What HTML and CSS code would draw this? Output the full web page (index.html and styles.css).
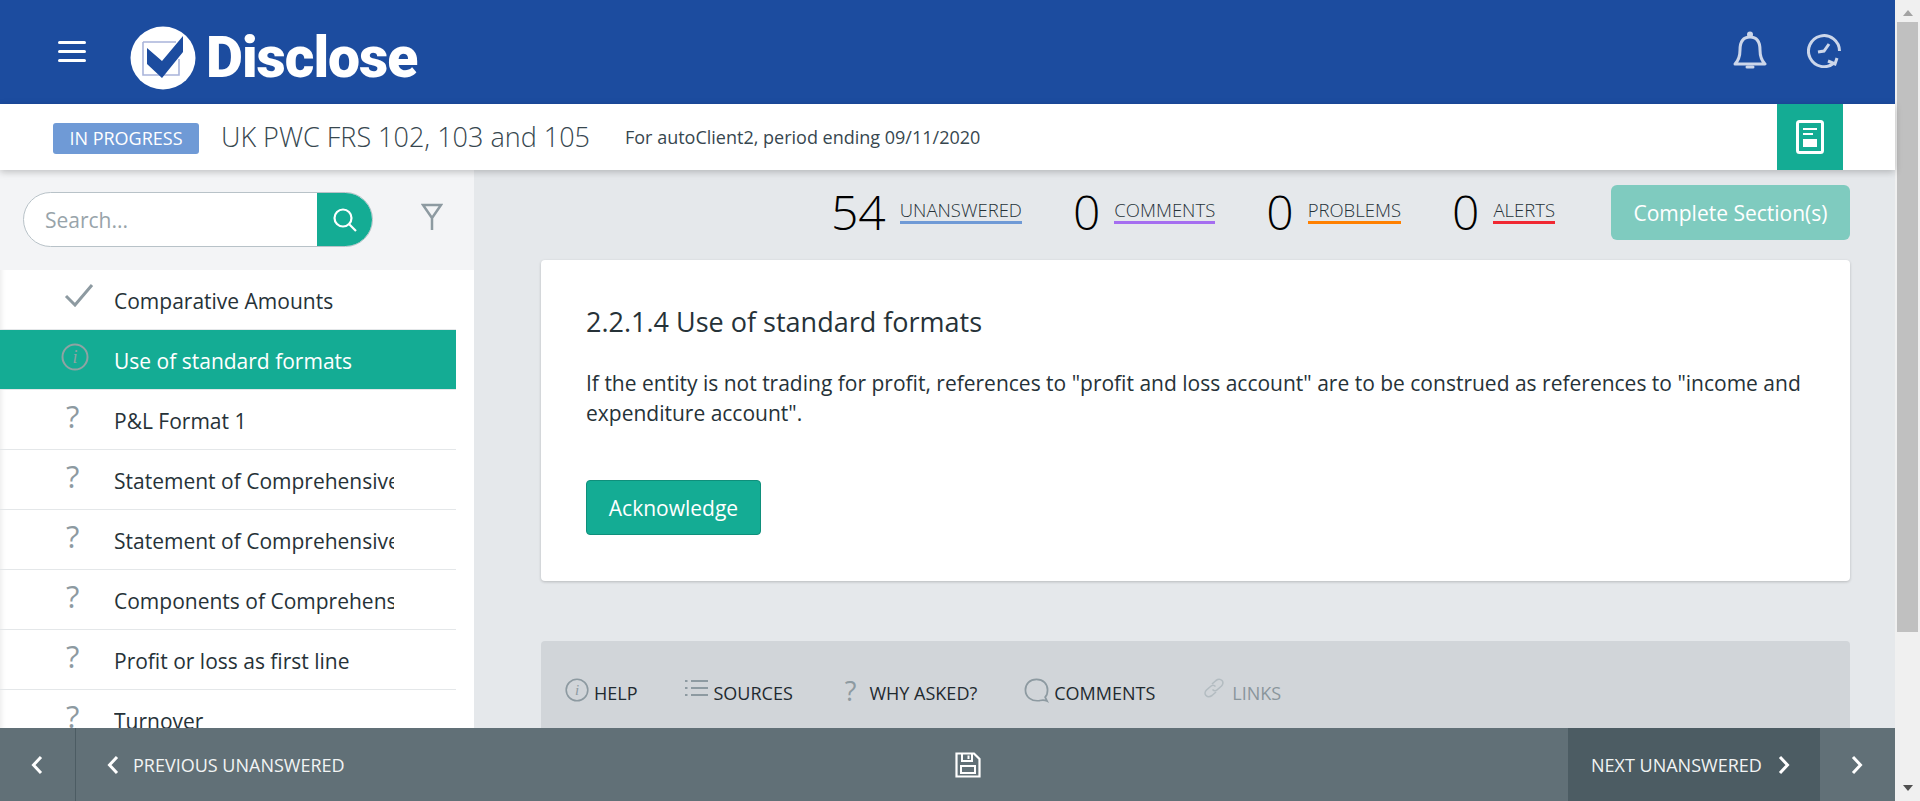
FILE: index.html
```html
<!DOCTYPE html>
<html lang="en">

<head>
    <meta charset="UTF-8">
    <title>Disclose</title>
    <link rel="stylesheet" href="styles.css">
</head>

<body>
    <div class="page">
        <header class="topbar">
            <div class="burger"><span></span><span></span><span></span></div>
            <svg class="logo-mark" viewBox="0 0 66 64">
                <ellipse cx="33" cy="32" rx="32.5" ry="31.5" fill="#fff" />
                <path d="M13 16H46M13 16V49H49V33" fill="none" stroke="#a9b4da" stroke-width="1.6" />
                <path d="M17 22L32 35L53 10V26L32 52L17 38Z" fill="#1c4c9f" />
            </svg>
            <span class="logo-text">Disclose</span>
            <div class="topbar-icons">
                <svg class="bell" viewBox="0 0 34 40" fill="none" stroke="#ccd6ea" stroke-width="3">
                    <path d="M2 33C6 29 7 25 7 19C7 11 10 6 17 6C24 6 27 11 27 19C27 25 28 29 32 33Z" stroke-linejoin="round" />
                    <circle cx="17" cy="3.5" r="1.5" />
                    <path d="M14 36H20" stroke-linecap="round" />
                </svg>
                <svg class="clock" viewBox="0 0 34 34" fill="none" stroke="#ccd6ea" stroke-width="3">
                    <path d="M27 29A15.500 15.500 0 1 1 32.500 17" />
                    <path d="M21 27L28 30L30 24" />
                    <path d="M22 10L17 17L11 18" />
                </svg>
            </div>
        </header>

        <div class="subbar">
            <span class="badge">IN PROGRESS</span>
            <h1 class="doc-title">UK PWC FRS 102, 103 and 105</h1>
            <span class="doc-meta">For autoClient2, period ending 09/11/2020</span>
            <div class="doc-btn">
                <svg viewBox="0 0 28 34" width="28" height="34" fill="none" stroke="#fff" stroke-width="3">
                    <rect x="1.500" y="1.500" width="25" height="31" rx="2" />
                    <path d="M7 9H21M7 14H17" stroke-width="2" />
                    <rect x="7" y="19" width="14" height="8" fill="#fff" stroke="none" />
                </svg>
            </div>
        </div>

        <div class="content">
            <aside class="sidebar">
                <div class="search-area">
                    <div class="search">
                        <span class="search-input">Search...</span>
                        <div class="search-btn">
                            <svg viewBox="0 0 26 26" width="26" height="26" fill="none" stroke="#fff" stroke-width="2.200">
                                <circle cx="11" cy="11" r="8.500" />
                                <path d="M17 17L24 24" />
                            </svg>
                        </div>
                    </div>
                    <svg class="funnel" viewBox="0 0 22 28" fill="none" stroke="#8d9aa1" stroke-width="2.500">
                        <path d="M2 2H20L11 15ZM11 15V27" />
                    </svg>
                </div>
                <ul class="nav-list">
                    <li class="nav-item">
                        <span class="nav-icon check">
                            <svg viewBox="0 0 30 24" width="30" height="24" fill="none" stroke="#8d9aa1" stroke-width="3">
                                <path d="M2 13L11 22L28 2" />
                            </svg>
                        </span>
                        <span class="nav-text">Comparative Amounts</span>
                    </li>
                    <li class="nav-item active">
                        <span class="nav-icon">
                            <svg class="info" viewBox="0 0 28 28" width="28" height="28">
                                <circle cx="14" cy="14" r="12.500" fill="none" stroke="#8fa3a3" stroke-width="2" />
                                <text x="14" y="20" text-anchor="middle" class="info-i" fill="#8fa3a3">i</text>
                            </svg>
                        </span>
                        <span class="nav-text">Use of standard formats</span>
                    </li>
                    <li class="nav-item"><span class="nav-icon q">?</span><span class="nav-text">P&amp;L Format 1</span></li>
                    <li class="nav-item"><span class="nav-icon q">?</span><span class="nav-text">Statement of Comprehensive</span></li>
                    <li class="nav-item"><span class="nav-icon q">?</span><span class="nav-text">Statement of Comprehensive</span></li>
                    <li class="nav-item"><span class="nav-icon q">?</span><span class="nav-text">Components of Comprehensive</span></li>
                    <li class="nav-item"><span class="nav-icon q">?</span><span class="nav-text">Profit or loss as first line</span></li>
                    <li class="nav-item"><span class="nav-icon q">?</span><span class="nav-text">Turnover</span></li>
                </ul>
            </aside>

            <main class="main">
                <div class="stats">
                    <div class="stat"><span class="stat-num">54</span><span class="stat-label blue">UNANSWERED</span></div>
                    <div class="stat"><span class="stat-num">0</span><span class="stat-label purple">COMMENTS</span></div>
                    <div class="stat"><span class="stat-num">0</span><span class="stat-label orange">PROBLEMS</span></div>
                    <div class="stat"><span class="stat-num">0</span><span class="stat-label red">ALERTS</span></div>
                    <button class="complete-btn">Complete Section(s)</button>
                </div>

                <section class="card">
                    <h2>2.2.1.4 Use of standard formats</h2>
                    <p>If the entity is not trading for profit, references to "profit and loss account" are to be construed as references to "income and expenditure account".</p>
                    <button class="ack-btn">Acknowledge</button>
                </section>

                <section class="tabs">
                    <div class="tab">
                        <svg class="info" viewBox="0 0 24 24" width="24" height="24">
                            <circle cx="12" cy="12" r="10.800" fill="none" stroke="#8d9aa1" stroke-width="1.600" />
                            <text x="12" y="17" text-anchor="middle" class="info-i small" fill="#8d9aa1">i</text>
                        </svg>
                        <span>HELP</span>
                    </div>
                    <div class="tab">
                        <svg viewBox="0 0 24 20" width="24" height="20" fill="none" stroke="#8d9aa1" stroke-width="2">
                            <path d="M7 3H24M7 10H24M7 17H24" />
                            <path d="M1 3H3.500M1 10H3.500M1 17H3.500" />
                        </svg>
                        <span>SOURCES</span>
                    </div>
                    <div class="tab">
                        <span class="q small-q">?</span>
                        <span>WHY ASKED?</span>
                    </div>
                    <div class="tab">
                        <svg viewBox="0 0 26 26" width="25" height="25" fill="none" stroke="#8d9aa1" stroke-width="1.800">
                            <path d="M24 24C21 22.500 19 23 16 23.500C8 24.500 1.500 20 1.500 12.500C1.500 6 6 1.500 13 1.500C20 1.500 24.500 6 24.500 12.500C24.500 16 23 19 22 20Z" />
                        </svg>
                        <span>COMMENTS</span>
                    </div>
                    <div class="tab off">
                        <svg viewBox="0 0 20 20" width="20" height="20" fill="none" stroke="#b3bcc1" stroke-width="1.600">
                            <path d="M8 6L12 2.500C14 1 16.500 1 18 2.500C19.500 4 19 6.500 17.500 8L13.500 11.500C12 13 10 13 8.500 11.500" />
                            <path d="M12 14L8 17.500C6 19 3.500 19 2 17.500C0.500 16 1 13.500 2.500 12L6.500 8.500C8 7 10 7 11.500 8.500" />
                        </svg>
                        <span>LINKS</span>
                    </div>
                </section>
            </main>
        </div>

        <footer class="footer">
            <div class="foot-back">
                <svg class="chev" viewBox="0 0 12 20"><path d="M10 2L2.500 10L10 18" /></svg>
            </div>
            <div class="foot-prev">
                <svg class="chev" viewBox="0 0 12 20"><path d="M10 2L2.500 10L10 18" /></svg>
                <span>PREVIOUS UNANSWERED</span>
            </div>
            <div class="foot-save">
                <svg viewBox="0 0 26 26" width="26" height="26" fill="none" stroke="#fff" stroke-width="2.200">
                    <path d="M1.500 1.500H19L24.500 7V24.500H1.500Z" />
                    <path d="M7 2V9H17V2M13.500 3.500V7" stroke-width="2" />
                    <rect x="6" y="14" width="14" height="7" stroke-width="2" />
                </svg>
            </div>
            <div class="foot-next">
                <span>NEXT UNANSWERED</span>
                <svg class="chev" viewBox="0 0 12 20"><path d="M2 2L9.500 10L2 18" /></svg>
            </div>
            <div class="foot-fwd">
                <svg class="chev" viewBox="0 0 12 20"><path d="M2 2L9.500 10L2 18" /></svg>
            </div>
        </footer>
    </div>

    <div class="scrollbar">
        <span class="arrow-up"></span>
        <div class="thumb"></div>
        <span class="arrow-down"></span>
    </div>
</body>

</html>
```

FILE: styles.css
```css
* {
    margin: 0;
    padding: 0;
    box-sizing: border-box;
    font-family: "Open Sans", Arial, sans-serif;
}

html,
body {
    height: 100%;
    overflow: hidden;
}

body {
    display: flex;
    background: #f0f0f0;
    color: #263238;
}

.page {
    width: 1895px;
    height: 801px;
    display: flex;
    flex-direction: column;
}

/* top bar */
.topbar {
    height: 104px;
    flex: none;
    background: #1c4c9f;
    display: flex;
    align-items: center;
    padding-left: 58px;
}

.burger {
    width: 28px;
    display: flex;
    flex-direction: column;
    gap: 6px;
    margin-right: 44px;
    margin-bottom: 2px;
}

.burger span {
    height: 3px;
    background: #fff;
    border-radius: 2px;
}

.logo-mark {
    width: 66px;
    height: 64px;
    margin-top: 11px;
    margin-bottom: 0;
}

.logo-text {
    font-family: Roboto, Arial, sans-serif;
    font-weight: 900;
    font-size: 57px;
    color: #fff;
    margin-left: 10px;
    margin-top: 10px;
    letter-spacing: -1px;
}

.topbar-icons {
    margin-left: auto;
    margin-right: 54px;
    display: flex;
    align-items: center;
    gap: 40px;
    margin-bottom: 2px;
}

.bell {
    width: 34px;
    height: 40px;
}

.clock {
    width: 34px;
    height: 34px;
}

/* sub bar */
.subbar {
    height: 66px;
    flex: none;
    background: #fff;
    display: flex;
    align-items: center;
    padding-left: 53px;
    position: relative;
    z-index: 2;
    box-shadow: 0 2px 7px rgba(0, 0, 0, 0.22);
}

.badge {
    width: 146px;
    height: 31px;
    background: #6f9ad6;
    border-radius: 3px;
    color: #fff;
    font-size: 18px;
    line-height: 31px;
    text-align: center;
    margin-top: 2px;
}

.doc-title {
    font-size: 27px;
    font-weight: 300;
    color: #37474f;
    margin-left: 22px;
    margin-bottom: 2px;
}

.doc-meta {
    font-size: 18px;
    color: #37474f;
    margin-left: 35px;
}

.doc-btn {
    margin-left: auto;
    margin-right: 52px;
    width: 66px;
    height: 66px;
    background: #14ac94;
    display: flex;
    align-items: center;
    justify-content: center;
}

/* main area */
.content {
    flex: 1;
    display: flex;
    min-height: 0;
    overflow: hidden;
    background: #e5e8eb;
}

.sidebar {
    width: 474px;
    flex: none;
    background: #fff;
    box-shadow: inset 6px 0 6px -6px rgba(0, 0, 0, 0.12);
}

.search-area {
    height: 100px;
    background: #f3f4f6;
    display: flex;
    align-items: flex-start;
    padding: 22px 0 0 23px;
}

.search {
    width: 350px;
    height: 55px;
    display: flex;
    border-radius: 28px;
    overflow: hidden;
    background: #fff;
    border: 1px solid #b8c2c8;
}

.search-input {
    flex: 1;
    font-size: 21px;
    line-height: 55px;
    padding-left: 21px;
    color: #98a4aa;
}

.search-btn {
    width: 56px;
    margin: -1px;
    background: #14ac94;
    display: flex;
    align-items: center;
    justify-content: center;
}

.funnel {
    width: 22px;
    height: 28px;
    margin: 11px 0 0 48px;
}

.nav-list {
    list-style: none;
    width: 456px;
}

.nav-item {
    height: 60px;
    display: flex;
    border-bottom: 1px solid #e4e7e9;
    font-size: 21px;
    line-height: 63px;
}

.nav-item.active {
    background: #14ac94;
    color: #fff;
}

.nav-icon {
    width: 114px;
    flex: none;
    padding: 13px 0 0 61px;
    line-height: 1;
}

.nav-icon.check {
    padding-left: 64px;
}

.nav-icon svg {
    display: block;
}

.q {
    color: #8d9aa1;
    font-weight: 400;
    font-size: 31px;
}

.nav-icon.q {
    padding: 11px 0 0 66px;
}

.nav-text {
    width: 280px;
    overflow: hidden;
    white-space: nowrap;
}

.info-i {
    font-family: "Liberation Serif", serif;
    font-style: italic;
    font-size: 18px;
}

.info-i.small {
    font-size: 15px;
}

.main {
    flex: 1;
    padding: 0 45px 0 67px;
}

.stats {
    height: 90px;
    display: flex;
    align-items: flex-start;
    justify-content: flex-end;
    padding-top: 15px;
}

.stat {
    display: flex;
    align-items: center;
    gap: 14px;
    margin-right: 51px;
    height: 45px;
}

.stat:nth-child(4) {
    margin-right: 56px;
}

.stat-num {
    font-size: 48px;
    font-weight: 300;
    color: #000;
    line-height: 1;
    margin-top: 8px;
}

.stat-label {
    font-size: 18.5px;
    font-weight: 300;
    color: #263238;
    line-height: 22px;
    border-bottom: 3px solid;
    margin-top: 7px;
}

.blue {
    border-color: #6f9ad6;
}

.purple {
    border-color: #a56ef0;
}

.orange {
    border-color: #ff8000;
}

.red {
    border-color: #f02832;
}

.complete-btn {
    width: 239px;
    height: 55px;
    background: #7fcbbf;
    border: none;
    border-radius: 6px;
    color: #fff;
    font-size: 21px;
}

.card {
    height: 321px;
    background: #fff;
    border-radius: 4px;
    box-shadow: 0 1px 3px rgba(0, 0, 0, 0.2);
    padding: 45px 45px 0;
}

.card h2 {
    font-size: 27px;
    font-weight: 400;
    color: #263238;
    line-height: 33px;
}

.card p {
    font-size: 21px;
    line-height: 30px;
    color: #263238;
    margin-top: 30px;
}

.ack-btn {
    width: 175px;
    height: 55px;
    margin-top: 52px;
    background: #14ac94;
    border: 1px solid #0f8f7b;
    border-radius: 4px;
    color: #fff;
    font-size: 21px;
    font-weight: 500;
}

.tabs {
    height: 200px;
    margin-top: 60px;
    background: #d1d5d9;
    border-radius: 4px 4px 0 0;
    display: flex;
    align-items: flex-start;
    padding: 37px 0 0 24px;
    gap: 47px;
}

.tab {
    display: flex;
    align-items: flex-start;
    gap: 6px;
    font-size: 18px;
    font-weight: 500;
    color: #1f2a30;
}

.tab span:last-child {
    margin-top: 3px;
}

.tab:nth-child(1) {
    gap: 5px;
    margin-right: -1px;
}

.tab:nth-child(2) {
    margin-right: 5px;
}

.tab:nth-child(4) {
    gap: 5px;
    margin-right: 2px;
}

.tab.off {
    gap: 8px;
    color: #8a969c;
    font-weight: 400;
}

.small-q {
    font-size: 27px;
    line-height: 1;
    margin: -1px 7px 0 0;
}

/* footer */
.footer {
    height: 73px;
    flex: none;
    background: #617077;
    display: flex;
    align-items: stretch;
    color: #f2f4f4;
    font-size: 18px;
    position: relative;
    z-index: 3;
}

.chev {
    width: 12px;
    height: 20px;
    fill: none;
    stroke: #fff;
    stroke-width: 3;
}

.foot-back {
    width: 76px;
    flex: none;
    border-right: 1px solid #4c5c63;
    display: flex;
    align-items: center;
    padding-left: 31px;
}

.foot-prev {
    width: 291px;
    flex: none;
    display: flex;
    align-items: center;
    gap: 14px;
    padding-left: 31px;
}

.foot-save {
    flex: 1;
    display: flex;
    align-items: center;
    justify-content: center;
}

.foot-next {
    width: 252px;
    flex: none;
    background: #4c5c63;
    display: flex;
    align-items: center;
    gap: 16px;
    padding-left: 23px;
}

.foot-fwd {
    width: 75px;
    flex: none;
    display: flex;
    align-items: center;
    padding-left: 31px;
}

/* fake browser scrollbar */
.scrollbar {
    width: 25px;
    height: 801px;
    flex: none;
    display: flex;
    flex-direction: column;
    align-items: center;
    background: #f0f0f0;
}

.arrow-up {
    width: 0;
    height: 0;
    margin: 10px 0 6px;
    border: 5px solid transparent;
    border-top: none;
    border-bottom: 6px solid #a3a3a3;
}

.thumb {
    width: 21px;
    height: 610px;
    background: #c0c0c0;
}

.arrow-down {
    width: 0;
    height: 0;
    margin-top: auto;
    margin-bottom: 10px;
    border: 5px solid transparent;
    border-bottom: none;
    border-top: 6px solid #505050;
}
```
